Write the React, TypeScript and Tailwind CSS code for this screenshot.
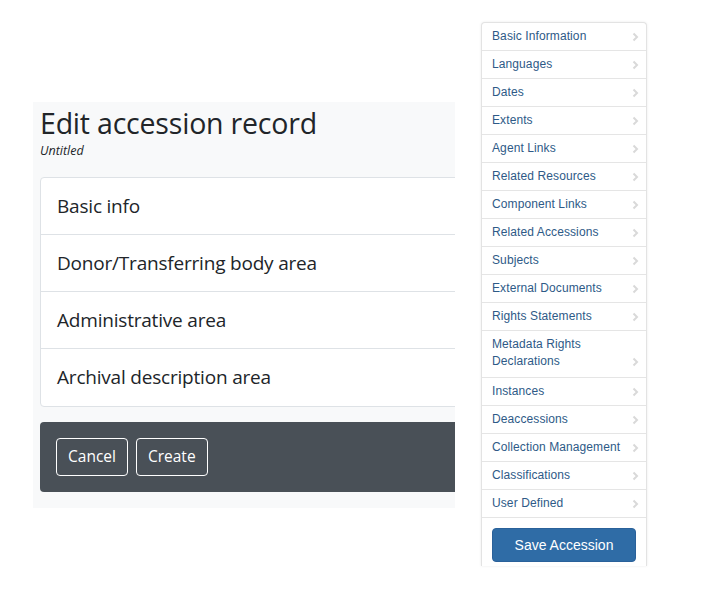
const sections = [
  "Basic info",
  "Donor/Transferring body area",
  "Administrative area",
  "Archival description area",
];

const navItems = [
  "Basic Information",
  "Languages",
  "Dates",
  "Extents",
  "Agent Links",
  "Related Resources",
  "Component Links",
  "Related Accessions",
  "Subjects",
  "External Documents",
  "Rights Statements",
  "Metadata Rights Declarations",
  "Instances",
  "Deaccessions",
  "Collection Management",
  "Classifications",
  "User Defined",
];

function Chevron() {
  return (
    <svg width="7" height="10" viewBox="0 0 7 10" className="shrink-0">
      <path d="M1.5 1.5 L5 5 L1.5 8.5" fill="none" stroke="#d9d9d9" strokeWidth="2" />
    </svg>
  );
}

function EditPanel() {
  return (
    <section className="mt-[102px] ml-[33px] w-[422px] h-[406px] bg-[#f8f9fa] overflow-hidden pl-[7px] font-['Open_Sans',sans-serif] text-[#212529]">
      <h1 className="text-[28.5px] leading-[36px] mt-[3px] tracking-[-0.2px]">Edit accession record</h1>
      <p className="text-[12.5px] italic leading-[18px] mt-[1px]">Untitled</p>
      <div className="mt-[17px] w-[440px] bg-white border border-[#dee2e6] rounded-[4px]">
        {sections.map((s, i) => (
          <div
            key={s}
            className={
              "h-[57px] flex items-center px-4 text-[19px] tracking-[-0.2px] " +
              (i < sections.length - 1 ? "border-b border-[#dee2e6]" : "")
            }
          >
            {s}
          </div>
        ))}
      </div>
      <div className="mt-[15px] w-[440px] h-[70px] bg-[#495057] rounded-[4px] flex items-center gap-2 px-4">
        <button className="h-[38px] px-[11px] border border-white rounded-[4px] text-white text-[15.5px]">Cancel</button>
        <button className="h-[38px] px-[11px] border border-white rounded-[4px] text-white text-[15.5px]">Create</button>
      </div>
    </section>
  );
}

function Sidebar() {
  return (
    <aside className="mt-[22px] ml-[26px] w-[166px] h-[544px] bg-white border-x border-t border-[#e3e3e3] rounded-t-[4px] shadow-[0_0_3px_rgba(0,0,0,0.08)] font-['Liberation_Sans',Arial,sans-serif]">
      <ul>
        {navItems.map((n) => {
          const tall = n.startsWith("Metadata");
          return (
            <li
              key={n}
              className={
                "flex items-end justify-between border-b border-[#e5e5e5] pl-[10px] pr-[7px] pt-[5px] text-[12px] leading-[17px] tracking-[0.1px] text-[#2e5a87] " +
                (tall ? "pb-[7px]" : "pb-[5px]")
              }
            >
              <span className={tall ? "w-[110px]" : ""}>{n}</span>
              <span className="mb-[3px]">
                <Chevron />
              </span>
            </li>
          );
        })}
      </ul>
      <div className="px-[10px] pt-[10px]">
        <button className="w-[144px] h-[34px] bg-[#2f6ca6] border border-[#2a619a] rounded-[4px] text-white text-[14px]">
          Save Accession
        </button>
      </div>
    </aside>
  );
}

export default function App() {
  return (
    <div className="w-[718px] h-[600px] bg-white flex items-start">
      <EditPanel />
      <Sidebar />
    </div>
  );
}
